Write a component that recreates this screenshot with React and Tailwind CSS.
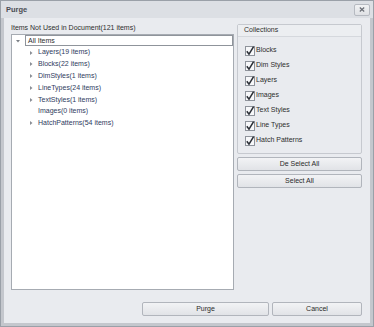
import React from "react";

const font = { fontFamily: '"Liberation Sans", Arial, sans-serif' };

function Check() {
  return (
    <span className="w-[10px] h-[10px] border border-[#8e939b] bg-[#f7f8fa] flex items-center justify-center shrink-0">
      <svg width="10" height="10" viewBox="0 0 10 10" className="overflow-visible">
        <path d="M1.8 5.2 L4 8.2 L8.6 0.6" fill="none" stroke="#2b2f36" strokeWidth="1.5" />
      </svg>
    </span>
  );
}

function Btn({ children, className = "" }) {
  return (
    <div
      className={
        "h-[14px] border border-[#b1b5bc] rounded-[2px] bg-gradient-to-b from-[#f2f3f5] to-[#e1e3e7] flex items-center justify-center text-[7px] text-[#2a2a2a] " +
        className
      }
    >
      {children}
    </div>
  );
}

const children = [
  ["Layers(19 items)", true],
  ["Blocks(22 items)", true],
  ["DimStyles(1 items)", true],
  ["LineTypes(24 items)", true],
  ["TextStyles(1 items)", true],
  ["Images(0 items)", false],
  ["HatchPatterns(54 items)", true],
];

const checks = ["Blocks", "Dim Styles", "Layers", "Images", "Text Styles", "Line Types", "Hatch Patterns"];

export default function App() {
  return (
    <div style={font} className="w-[374px] h-[327px] border border-[#9aa0a8] bg-[#e9ebef] flex flex-col">
      <div className="h-[17px] bg-[#dcdfe4] flex items-center justify-between pl-[5px] pr-[3px] shrink-0">
        <span className="text-[7.5px] font-bold text-[#4a4d53]">Purge</span>
        <div className="w-[16px] h-[12px] border border-[#b6bac1] rounded-[2px] bg-gradient-to-b from-[#f1f2f4] to-[#dfe1e5] flex items-center justify-center">
          <svg width="6" height="5" viewBox="0 0 6 5">
            <path d="M0.8 0.5 L5.2 4.5 M5.2 0.5 L0.8 4.5" stroke="#6b6f76" strokeWidth="1.2" />
          </svg>
        </div>
      </div>
      <div className="flex-1 border-x-[3px] border-b-[3px] border-[#c4c7cd] flex flex-col pl-[7px] pr-[8px] pt-[6px] pb-[7px]">
        <div className="flex gap-[3px]">
          <div className="w-[223px] flex flex-col">
            <div className="h-[10px] text-[7px] text-[#2e2e2e] leading-[10px] -mt-[1px] mb-[1px]">
              Items Not Used in Document(121 items)
            </div>
            <div className="h-[256px] border border-[#a6abb2] bg-white flex flex-col">
              <div className="h-[11.8px] flex items-center">
                <svg width="13" height="10" viewBox="0 0 13 10" className="shrink-0">
                  <path d="M4 4 L8 4 L6 6.5 Z" fill="#7a7e85" />
                </svg>
                <div className="flex-1 h-[11px] border border-[#8f949b] flex items-center pl-[2px] text-[7px] text-[#2e2e2e]">
                  All Items
                </div>
              </div>
              {children.map(([t, arrow]) => (
                <div key={t} className="h-[11.8px] flex items-center pl-[16px] text-[7px] text-[#2f3b60]">
                  <span className="w-[10px] shrink-0 flex items-center">
                    {arrow && (
                      <svg width="6" height="6" viewBox="0 0 6 6">
                        <path d="M2 1 L4.5 3 L2 5 Z" fill="#8a8e95" />
                      </svg>
                    )}
                  </span>
                  <span>{t}</span>
                </div>
              ))}
            </div>
          </div>
          <div className="w-[125px] flex flex-col gap-[3px]">
            <div className="h-[130px] border border-[#c6c9cf] rounded-[2px] flex flex-col">
              <div className="h-[12px] bg-[#eceef1] border-b border-[#d5d8dd] flex items-center pl-[6px] text-[7px] text-[#2e2e2e]">
                Collections
              </div>
              <div className="pt-[6px] pl-[7px] flex flex-col">
                {checks.map((c) => (
                  <div key={c} className="h-[15px] flex items-center gap-[1px] text-[7px] text-[#2e2e2e]">
                    <Check />
                    <span>{c}</span>
                  </div>
                ))}
              </div>
            </div>
            <Btn>De Select All</Btn>
            <Btn>Select All</Btn>
          </div>
        </div>
        <div className="flex justify-end gap-[3px] mt-[12px]">
          <Btn className="w-[127px]">Purge</Btn>
          <Btn className="w-[90px]">Cancel</Btn>
        </div>
      </div>
    </div>
  );
}
